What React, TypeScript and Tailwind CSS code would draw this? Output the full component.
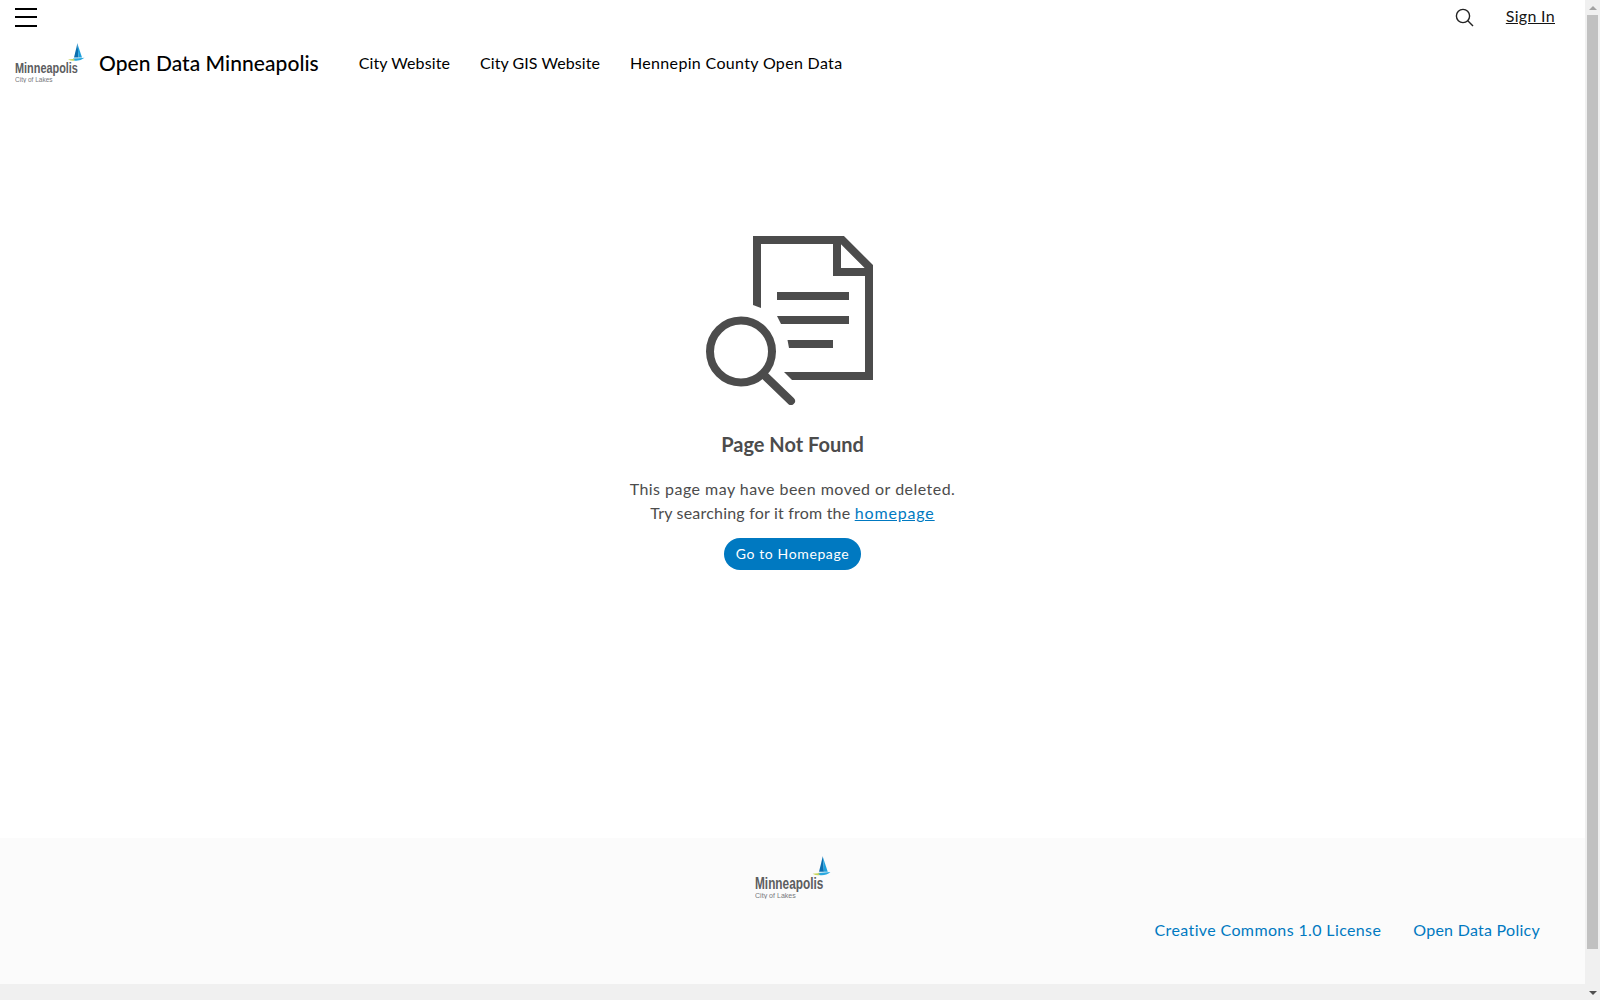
const font = '"Lato","Open Sans",sans-serif';

function Logo({ w }: { w: number }) {
  return (
    <svg width={w} viewBox="0 0 70 40" style={{ height: (w * 40) / 70 }} className="shrink-0">
      <path d="M62.5 0 L59 14.5 L63.5 14.5 Z" fill="#0b6fb0" />
      <path d="M62.5 1 L63.5 14.5 L67 14.5 Z" fill="#1ea0dc" />
      <path d="M58 15.6 Q64 15.2 69.5 14.8 Q65 18.6 59 17.6 Z" fill="#29a8df" />
      <path d="M53 16.4 Q56 15.8 59.5 16 L59 17.8 Q56 18 53 16.4 Z" fill="#c9d45a" />
      <text transform="translate(0 30) scale(0.752 1)" fontFamily='"Liberation Sans",sans-serif' fontWeight="700" fontSize="14.5" fill="#5c5d60">Minneapolis</text>
      <text transform="translate(0 38.7) scale(0.93 1)" fontFamily='"Liberation Sans",sans-serif' fontSize="7" fill="#77787b">City of Lakes</text>
    </svg>
  );
}

export default function App() {
  return (
    <div className="flex h-[1000px] overflow-hidden bg-white" style={{ fontFamily: font }}>
      <div className="flex flex-col flex-1 min-w-0">
        <header className="h-[96px]">
          <div className="flex items-center justify-between h-[34px] pl-[15px] pr-[30px]">
            <div className="flex flex-col justify-between w-[22px] h-[19px]">
              <span className="h-[2px] bg-black" /><span className="h-[2px] bg-black" /><span className="h-[2px] bg-black" />
            </div>
            <div className="flex items-center gap-[32px]">
              <svg width="19" height="19" viewBox="0 0 19 19" fill="none" stroke="#222" strokeWidth="1.4">
                <circle cx="8" cy="8" r="6.6" /><path d="M12.8 12.8 L18 18" />
              </svg>
              <a className="text-[16px] leading-[22px] mb-[2px] text-[#151515] underline tracking-[0.3px]">Sign In</a>
            </div>
          </div>
          <div className="flex items-center h-[52px] pl-[15px] mt-[3px]">
            <Logo w={70} />
            <span className="ml-[14px] text-[21px] font-medium text-black tracking-[0.05px] mr-[40px]">Open Data Minneapolis</span>
            <nav className="flex gap-[30px] text-[16px] text-black">
              <a className="tracking-[0.1px]">City Website</a>
              <a className="tracking-[0.07px]">City GIS Website</a>
              <a className="tracking-[0.33px]">Hennepin County Open Data</a>
            </nav>
          </div>
        </header>
        <main className="flex-1 flex flex-col items-center text-[#4c4c4c]">
          <svg width="167" height="169" viewBox="0 0 167 169" className="mt-[140px] ml-[-6px]">
            <g fill="none" stroke="#4c4c4c" strokeWidth="8">
              <path d="M51 68 V4 H136.3 L163 30.7 V140 H88" />
              <path d="M131 4 V36 H163" />
              <circle cx="35" cy="115.5" r="31" />
              <path d="M58 139 L85 165" strokeLinecap="round" />
            </g>
            <g fill="#4c4c4c">
              <polygon points="47,66 55,66 55,72 47,69" />
              <polygon points="78,136 90,136 90,144 86,144" />
              <rect x="71" y="56" width="72" height="8" />
              <polygon points="71,80 143,80 143,88 75,88" />
              <polygon points="81.5,104 127,104 127,112 83,112" />
            </g>
          </svg>
          <h1 className="mt-[26px] text-[20px] font-bold leading-[26px]">Page Not Found</h1>
          <p className="mt-[20px] text-[16px] leading-[24px] text-center">
            <span className="tracking-[0.47px]">This page may have been moved or deleted.</span><br />
            <span className="tracking-[0.2px]">Try searching for it from the </span>
            <a className="text-[#0079c1] underline tracking-[0.85px]">homepage</a>
          </p>
          <a className="mt-[13px] flex items-center h-[32px] px-[12px] pb-[1px] rounded-[16px] bg-[#0079c1] text-white text-[14px] tracking-[0.62px]">Go to Homepage</a>
        </main>
        <footer className="h-[146px] bg-[#fbfbfb] flex flex-col">
          <div className="flex justify-center pt-[18px]"><Logo w={76} /></div>
          <div className="flex justify-end gap-[32px] pr-[45px] mt-[19px] text-[16px] text-[#0079c1]">
            <a className="tracking-[0.37px]">Creative Commons 1.0 License</a>
            <a className="tracking-[0.27px]">Open Data Policy</a>
          </div>
        </footer>
        <div className="h-[16px] bg-[#f0f0f0]" />
      </div>
      <div className="w-[15px] bg-[#f0f0f0] flex flex-col items-center">
        <div className="h-[15px] flex items-center justify-center">
          <div className="w-0 h-0 border-l-[4px] border-r-[4px] border-b-[4px] border-l-transparent border-r-transparent border-b-[#a3a3a3]" />
        </div>
        <div className="flex-1 w-full px-[2px]"><div className="h-[934px] bg-[#c1c1c1]" /></div>
        <div className="h-[15px] flex items-center justify-center">
          <div className="w-0 h-0 border-l-[4px] border-r-[4px] border-t-[4px] border-l-transparent border-r-transparent border-t-[#505050]" />
        </div>
      </div>
    </div>
  );
}
